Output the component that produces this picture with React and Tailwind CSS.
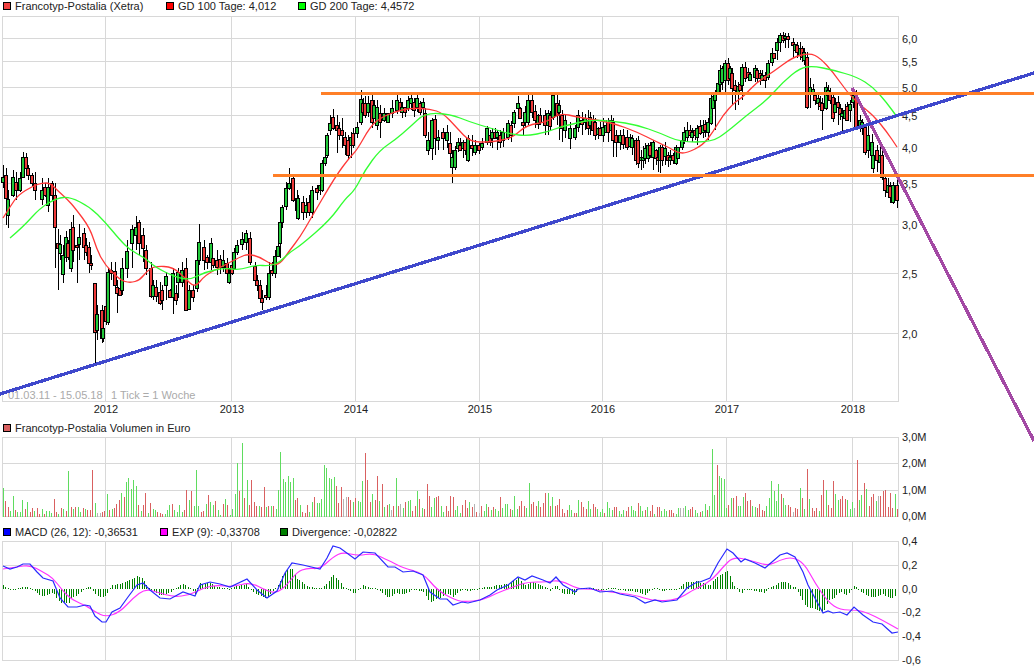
import React from 'react';

// [x, bodyTop, bodyBottom, green?, wickTop?, wickBottom?] in page pixels
const candles = [
  [3,177,182,1,165],[6,175,198,0,168,225],[8,199,215,1,190,228],[13,177,195,1,170,197],[16,182,190,0,172,200],[20,178,190,1,172,192],[23,157,177,1],[26,157,168,0],[28,168,175,0,165],[32,175,183,0],[35,183,190,0,172,200],
  [42,190,199,1,178,205],[45,187,195,0],[48,187,205,1,178,212],[52,183,195,0],[55,195,227,0,183,268],
  [58,243,248,0,229,290],[60,244,253,1,235,260],[63,255,274,1,245,283],[66,237,257,1,231,262],[68,243,257,0],[71,229,268,1,222,272],[73,227,250,0,215,262],[77,245,247,0,238,283],[79,237,244,1,224,260],[84,233,247,0,228,260],[86,245,252,0,238,256],[89,247,263,0,242,273],[91,263,265,0,255,270],
  [95,283,332,0,283,363],[97,314,330,1,305,340],[102,310,338,0,305,343],[103,328,338,1],[106,306,321,0,300,325],[108,272,322,1,268,325],[111,270,273,0,262],[115,271,285,0,262,292],[117,287,293,0,280,313],[120,288,295,0],[122,268,290,1,258,295],[127,251,268,1,240,278],[132,229,243,1,225,268],[136,227,235,1,216,250],[139,222,243,0,220,255],[143,235,248,0,228,262],[146,250,268,0,245,275],[151,268,296,0,262,298],[153,285,296,1,280,300],[156,287,296,0,280,302],[160,292,303,0,282,305],[162,290,300,0,285,310],[166,276,285,1,272,300],[170,290,297,0],[173,273,297,1,268,314],[176,293,300,0,285,305],[178,272,282,1,268,298],[182,270,282,1,262,287],[186,268,310,0,258,310],[189,290,309,1,285,310],[193,290,297,0,285,302],[197,260,288,1,255,292],[199,242,260,1,224,265],[204,247,260,0,240,270],[207,257,262,0],[211,243,262,1,238,270],[213,258,265,0],[217,260,267,0,250,275],[220,259,267,0],[223,260,267,1,250,272],[227,263,273,0,258,282],[229,273,282,1,268,284],[232,265,273,0,258,275],[234,252,268,1,248,270],[237,245,252,1],[242,239,244,1,232,250],[246,233,242,1,230,250],[250,238,262,0,232,265],[255,266,280,0,262,285],[257,280,285,0],[260,285,298,0,280,302],[262,298,302,0,290,310],[266,295,297,0,285,300],[269,273,297,1,262,300],[272,270,273,0,262,276],[275,256,273,1,250,278],[278,246,256,1],[280,222,243,1,212,258],[282,207,222,1,205,228],[286,188,206,1,182,210],[289,183,188,1,168,190],[293,178,200,0,176,202],[297,198,210,0,190,218],[298,198,218,1,195,220],
  [303,202,212,0,196,220],[306,205,212,1,198,218],[309,202,212,0,195],[312,190,212,1,186,218],[317,188,192,0,185,200],[320,185,190,1,180],[322,163,190,1,160,192],[325,157,163,1,145,166],[327,135,155,1,133,158],[330,123,130,1,115,135],[333,117,128,0,109,130],[337,125,130,0,115,153],[339,128,135,0,122,140],[342,130,135,0,118,148],[345,137,145,0,132,155],[348,140,155,0,135,160],[351,137,145,1,132,158],[353,133,145,0,128,148],[357,127,133,1,122,138],[361,99,122,1,90,125],[363,103,112,0,98],[365,103,115,0,96,118],[368,103,112,1,96],[372,100,122,0,92,128],[374,105,118,1],[377,107,125,1,100,130],[380,113,122,0,105,138],[384,113,120,1,108],[388,113,122,1],[392,108,113,1,100],[397,100,110,1,95,114],[400,102,110,0,98],[402,107,112,1,102,118],[405,107,112,0],[408,100,108,1,96],[411,98,103,1,94,110],[414,102,110,0],[417,98,107,1,94,112],[420,103,112,0],[423,102,107,1,98,113],[425,113,135,0,108,138],[428,140,150,1,132,155],[432,120,148,1,118,160],[435,119,138,0,115,155],[438,137,140,1,130,150],[443,132,138,0,128,150],[447,132,140,1,125,148],[450,143,153,0,132,165],[452,157,167,1,150,183],[455,150,167,1,146,170],[458,142,148,1,138,152],[460,145,150,0,138],[463,142,148,1,140,158],[465,142,150,0],[468,138,160,1,135,162],[472,145,148,0,135,156],[475,145,152,1,140,155],[479,145,150,0],[482,143,147,1,138,150],[487,128,142,1,126,145],[490,135,142,0,130],[492,132,138,1,128,148],[495,132,138,0,128],[497,132,137,1,130,150],[500,135,142,0,130],[503,132,140,1,128,147],[508,123,137,1,120,140],[511,125,135,0],[514,112,123,1,110,128],[518,103,108,1,96,112],[520,108,118,0],[523,122,125,0,115,135],[525,112,122,1],[528,100,122,1,95,125],[532,100,112,0,95,118],[535,111,120,0,105,128],[538,115,124,1],[540,115,122,0,108],[545,115,125,0,110,135],[548,113,125,1,110,135],[550,115,126,0],[553,95,117,1,92,120],[557,103,115,0,95,125],[559,105,112,1,100,140],[562,115,128,0,110,142],[565,120,130,1,115,138],[570,128,138,1,122,149],[575,128,137,1,125,140],[578,115,127,1,110,132],[582,120,124,0,112,135],[585,118,122,1,114,130],[588,120,128,0,110,135],
  [590,117,125,1,112,135],[593,120,130,0,115],[595,122,135,0,118,140],[598,128,134,1],[600,128,135,0,122,136],[603,127,135,1,118,142],[606,125,132,1],[608,122,132,0,118,142],[611,120,130,1,115],[613,122,140,0,118,157],[616,135,142,0,130,157],[620,135,142,1,130,150],[623,135,144,0],[627,137,147,0,130,150],[630,137,146,1],[632,138,147,1,135,155],[636,140,160,0,138,165],[638,140,163,0,136,168],[641,157,160,1,150,170],[643,157,160,1,146,168],[645,148,158,1],[648,145,158,1,143,162],[650,145,155,0],[653,142,157,1,140,170],[656,150,158,0],[658,157,160,0,150,172],[660,147,160,1,145,173],[662,147,160,0,145,166],[665,148,156,1,142,165],[668,155,160,0],[670,157,160,1,150,165],[673,155,160,0],[676,147,163,1,145,165],[678,147,158,1],[682,140,147,1,135,150],[684,132,140,1],[687,130,137,1,122,142],[690,130,135,0,125],[692,132,137,1,128,142],[695,130,135,0],[697,128,137,1,125,145],[700,126,133,0],[703,125,132,1,120,138],[705,124,130,0],[708,122,132,1,118,140],[711,98,123,1,92,125],[713,96,108,1],[715,93,100,1,90,130],[718,83,93,1,72,95],[720,70,84,1,65,92],[722,68,82,1,66,90],[725,63,80,1,60,92],[728,63,80,0,58,85],[730,68,78,1],[732,73,88,0,68,105],[735,85,90,0,80,110],[738,86,94,1,82,105],[740,84,90,0],[742,67,85,1,64,100],[745,67,78,0,62,82],[748,72,77,0,68,80],[750,74,80,1],[755,68,77,1,65,82],[757,70,78,0,68],[760,73,78,0,70,85],[762,75,80,1],[765,75,80,0,72,88],[768,63,77,1,60,80],[772,53,62,1,48,66],[774,53,58,0],[777,42,50,1,38,60],[780,35,42,1,33,52],[783,35,40,0,32],[785,36,38,1,33,48],[788,36,39,0,33,48],[793,42,45,0,38,58],[795,44,50,1],[797,45,52,0,42,58],[800,48,55,1,42,60],[802,48,57,0,46,62],[804,52,60,1,48,65],[807,57,107,0,52,109],[810,87,93,1,78,108],[813,89,94,1,84],[815,95,100,0,92,105],[818,98,103,1,95,110],[820,102,106,0,96],[822,103,110,0,98,130],[826,87,108,1,82,110],[828,90,95,1,85],[830,93,100,0,88],[833,97,118,0,94,122],[835,104,112,1],[838,102,107,0,96,125],[840,108,114,0],[842,113,116,1,108,132],[845,110,118,1,104],[847,106,120,0,102],[850,104,110,1,100,122],[853,95,102,1,92,108],[856,95,127,0,90,128],[860,120,127,1,115,132],[862,122,128,1],[865,127,152,0,124,155],[868,135,150,1,125,158],[872,142,155,1,134],[873,155,168,1,150,173],[877,150,160,0,145,172],[880,155,162,1,142],[882,155,177,0,150,180],[885,178,190,0,176,197],[888,185,192,1,178],[890,186,197,0,182,203],[893,185,202,1,182,204],[897,185,200,0,178,208],
];

const ma100 = [[3,218],[10,207],[18,195],[33,186],[42,183],[50,183],[57,190],[68,200],[75,208],[90,228],[97,250],[105,265],[120,280],[130,283],[140,280],[147,271],[155,266],[173,267],[185,278],[195,288],[205,275],[225,265],[240,257],[248,254],[260,257],[272,265],[280,264],[290,250],[300,237],[310,220],[335,177],[350,157],[357,150],[370,127],[380,118],[397,111],[412,108],[430,109],[443,113],[457,128],[470,142],[490,142],[503,140],[513,137],[527,125],[547,122],[560,113],[577,117],[590,119],[613,123],[637,132],[657,142],[670,148],[678,153],[687,153],[703,145],[713,132],[723,115],[735,102],[743,97],[757,82],[773,72],[793,57],[810,53],[820,58],[833,72],[847,92],[860,105],[873,115],[887,132],[897,147]];
const ma200 = [[10,238],[23,227],[40,208],[57,198],[70,197],[90,207],[105,222],[120,240],[130,250],[145,258],[155,267],[175,277],[190,280],[205,272],[225,268],[240,270],[255,265],[270,266],[280,262],[290,252],[300,246],[330,220],[345,199],[355,190],[365,170],[380,150],[395,140],[410,127],[425,113],[450,114],[470,122],[490,128],[510,134],[527,136],[547,132],[560,127],[577,123],[590,120],[613,121],[637,125],[660,133],[680,142],[712,142],[727,132],[747,115],[767,100],[783,82],[800,68],[813,66],[833,70],[857,77],[873,87],[887,103],[897,117]];

// volume bars: positive = green, negative = red, above 100 = grey (height v - 100)
const volSegments = [
  { from: 3, to: 389, bars: [29,-16,-10,6,21,-7,5,5,17,-8,15,-5,-9,6,-9,-3,8,-3,6,6,4,-18,-5,3,-9,8,-6,46,-10,8,-10,10,5,-9,8,-7,-7,-47,14,104,104,-5,-6,23,-7,8,-9,-13,-17,24,-20,35,39,28,37,31,-12,6,-12,-24,4,-14,8,7,-5,-4,-3,3,7,12,-13,7,5,12,5,-7,-27,17,-26,11,47,11,-5,-6,13,-22,15,12,-16,7,2,-13,18,-12,2,8,23,54,-26,74,-19,37,-12,-37,-15,-11,11,-10,-30,10,-11,11,-11,8,27,65,38,35,41,35,39,-17,-19,12,-5,-4,-12,5,15,-20,14,14,18,52,49,39,38,40,-31,-14,-30,118,120,-20,-17,15,-19,16,15,36,-64,-37,-15,23,-17,-41,16,-33,10,-12,13] },
  { from: 391, to: 697, bars: [107,-11,39,-11,113,9,-15,16,17,-6,-11,26,-18,9,-8,-33,-21,10,19,-20,-21,11,5,-11,-6,-21,-20,7,11,4,-12,-17,-9,15,-10,113,-5,104,-11,6,13,-10,7,-10,8,6,-20,9,13,13,-8,7,21,8,-11,-16,-11,9,34,-13,-15,-11,16,-10,-14,-24,24,-11,20,-11,-12,-18,-8,-4,-7,12,7,-4,-4,17,-15,-10,-8,16,8,-13,-10,8,5,8,-4,15,9,7,-10,-10,6,3,7,-6,-10,11,7,6,-14,11,6,-7,10,-6,-12,3,-10,-10,6,8,6,-7,-7,-4,3,9,109,109,11,7,-8,-10,7,4] },
  { from: 700, to: 897, bars: [-5,6,13,-7,11,68,22,-52,41,39,38,9,-12,19,-19,-21,11,11,20,-24,-16,-17,11,10,-9,-13,-7,-6,11,19,36,26,16,33,-23,19,12,-12,-10,105,-9,-8,29,-19,8,-48,18,-9,-6,-9,6,-22,-37,27,-12,-9,-36,23,17,-18,-21,-18,17,8,15,109,-57,17,22,-34,28,-11,-20,-23,16,121,-21,-26,-27,-10,-24,-9,23,-8] },
];

const macd = [[3,566],[10,569],[17,567],[23,564],[30,564],[37,572],[43,578],[53,581],[60,598],[68,607],[77,607],[85,605],[90,606],[95,616],[102,622],[106,622],[112,612],[120,608],[128,597],[137,585],[143,583],[150,590],[160,598],[170,599],[183,592],[195,596],[200,585],[210,582],[220,584],[230,587],[247,579],[257,590],[267,598],[277,591],[285,573],[292,563],[303,565],[320,569],[327,558],[333,546],[340,548],[355,559],[363,552],[375,553],[388,567],[395,567],[403,572],[413,571],[423,575],[430,592],[440,599],[447,599],[453,605],[462,602],[468,603],[480,600],[490,595],[497,590],[508,585],[518,577],[525,580],[532,576],[543,580],[550,583],[556,577],[563,585],[575,592],[578,589],[590,588],[600,592],[612,591],[620,594],[635,597],[645,603],[655,600],[662,602],[677,600],[687,588],[697,582],[700,582],[710,578],[718,563],[727,549],[733,553],[741,562],[745,559],[755,563],[765,568],[780,555],[787,553],[795,557],[803,572],[808,585],[823,613],[828,611],[833,613],[840,612],[847,615],[854,607],[863,615],[873,622],[882,624],[892,633],[898,632]];
const expLine = [[3,569],[17,567],[30,565],[43,572],[53,578],[62,590],[72,600],[87,606],[95,612],[106,617],[120,612],[133,598],[145,589],[157,592],[173,597],[190,595],[203,588],[217,585],[233,587],[250,582],[267,591],[277,593],[287,585],[297,572],[307,568],[320,569],[333,557],[343,552],[358,556],[373,553],[387,560],[390,561],[403,568],[423,573],[437,590],[453,599],[463,602],[483,600],[497,593],[513,587],[527,582],[547,582],[560,580],[578,589],[590,589],[610,592],[635,595],[653,601],[677,600],[693,590],[700,587],[713,579],[723,567],[733,557],[750,560],[768,566],[780,560],[792,557],[804,563],[815,583],[828,602],[840,610],[857,610],[868,613],[882,620],[898,629]];

const hGrid = [38, 61, 87, 115, 147, 183, 224, 273, 333];
const yearGrid = [105, 231, 355, 479, 602, 726, 852];
const years = [2012, 2013, 2014, 2015, 2016, 2017, 2018];
const priceLabels = [['6,0', 38], ['5,5', 61], ['5,0', 87], ['4,5', 115], ['4,0', 147], ['3,5', 183], ['3,0', 224], ['2,5', 273], ['2,0', 333]];
const volLabels = [['3,0M', 436], ['2,0M', 462], ['1,0M', 489], ['0,0M', 515]];
const macdLabels = [['0,4', 540], ['0,2', 564], ['0,0', 588], ['-0,2', 611], ['-0,4', 635], ['-0,6', 659]];

const toPoints = (pts) => pts.map((p) => p.join(',')).join(' ');

// midpoint quadratics so the averages don't kink at every traced point
const smooth = (pts) => {
  let d = `M${pts[0][0]} ${pts[0][1]}`;
  for (let i = 1; i < pts.length - 1; i++) {
    const mx = (pts[i][0] + pts[i + 1][0]) / 2;
    const my = (pts[i][1] + pts[i + 1][1]) / 2;
    d += ` Q${pts[i][0]} ${pts[i][1]} ${mx} ${my}`;
  }
  const last = pts[pts.length - 1];
  return `${d} L${last[0]} ${last[1]}`;
};

const valueAt = (pts, x) => {
  for (let i = 1; i < pts.length; i++) {
    if (x <= pts[i][0]) {
      const t = (x - pts[i - 1][0]) / (pts[i][0] - pts[i - 1][0]);
      return pts[i - 1][1] + (pts[i][1] - pts[i - 1][1]) * t;
    }
  }
  return pts[pts.length - 1][1];
};

const volBars = volSegments.flatMap((s) =>
  s.bars.map((v, i) => ({ x: Math.round(s.from + (i * (s.to - s.from)) / (s.bars.length - 1)), v }))
);

const divBars = Array.from({ length: 368 }, (_, i) => {
  const x = 3 + i * 2.43;
  const diff = (valueAt(expLine, x) - valueAt(macd, x)) * 1.3;
  return { x: Math.round(x), diff: Math.abs(diff) < 1 ? (diff < 0 ? -1 : 1) : diff };
});

const Grid = ({ left = 2, right = 898, top, bottom, rows }) => (
  <g stroke="#d8d8d8" strokeWidth="1" shapeRendering="crispEdges">
    <rect x={left + 0.5} y={top + 0.5} width={right - left} height={bottom - top} fill="none" />
    {rows.map((y) => (
      <line key={y} x1={left} x2={right} y1={y + 0.5} y2={y + 0.5} />
    ))}
    {yearGrid.map((x) => (
      <line key={x} x1={x + 0.5} x2={x + 0.5} y1={top} y2={bottom} />
    ))}
  </g>
);

const AxisLabels = ({ labels }) => (
  <g className="text-[11px] fill-[#222222]">
    {labels.map(([t, y]) => (
      <text key={t} x="902" y={y + 5}>{t}</text>
    ))}
  </g>
);

const Candle = ({ c }) => {
  const [x, top, bottom, green, wickTop, wickBottom] = c;
  const seed = (x * 7919) % 97;
  const hi = wickTop ?? top - (seed % 7);
  const lo = wickBottom ?? bottom + ((seed >> 2) % 8);
  return (
    <g shapeRendering="crispEdges">
      <line x1={x + 0.5} x2={x + 0.5} y1={hi} y2={lo} stroke="#000" />
      <rect x={x - 1.5} y={top} width={3} height={Math.max(bottom - top, 1)} fill={green ? '#22c93a' : '#ee3a3a'} stroke="#000" />
    </g>
  );
};

const Legend = ({ items, className }) => (
  <div className={`flex items-center shrink-0 h-[12px] pl-[3px] text-[11px] leading-none text-[#222222] ${className}`}>
    {items.map((it) => (
      <div key={it.label} className="flex items-center gap-[4px]" style={{ width: it.width }}>
        <span className="w-[8px] h-[8px] border border-black" style={{ backgroundColor: it.color }} />
        <span className="whitespace-nowrap">{it.label}</span>
      </div>
    ))}
  </div>
);

const App = () => {
  return (
    <div className="w-[1034px] h-[670px] bg-white overflow-hidden flex flex-col font-['Liberation_Sans',Arial,sans-serif]">
      <Legend className="mb-[4px]" items={[
        { color: '#f04040', label: 'Francotyp-Postalia (Xetra)', width: 163 },
        { color: '#ff0000', label: 'GD 100 Tage: 4,012', width: 132 },
        { color: '#00ff00', label: 'GD 200 Tage: 4,4572' },
      ]} />

      {/* price chart */}
      <svg width="1034" height="406" viewBox="0 16 1034 406" className="block overflow-visible shrink-0">
        <Grid top={16} bottom={401} rows={hGrid} />
        <AxisLabels labels={priceLabels} />
        {years.map((y, i) => (
          <text key={y} x={yearGrid[i] + 1} y="413" textAnchor="middle" className="text-[11px] fill-[#222222]">{y}</text>
        ))}
        <text x="8" y="399" className="text-[11px] fill-[#aaaaaa]">01.03.11 - 15.05.18</text>
        <text x="111" y="399" className="text-[11px] fill-[#aaaaaa]">1 Tick = 1 Woche</text>
        {candles.map((c, i) => (
          <Candle key={i} c={c} />
        ))}
        <path d={smooth(ma100)} fill="none" stroke="#ff3838" strokeWidth="1.3" />
        <path d={smooth(ma200)} fill="none" stroke="#33ff33" strokeWidth="1.3" />
        <g shapeRendering="crispEdges">
          <line x1="852" y1="88" x2="1034" y2="441" stroke="#a349a4" strokeWidth="3.3" />
          <line x1="0" y1="394" x2="1034" y2="73" stroke="#3f48cc" strokeWidth="3.3" />
          <line x1="321" y1="93" x2="1034" y2="93" stroke="#ff7f27" strokeWidth="3" />
          <line x1="273" y1="175.5" x2="1034" y2="175.5" stroke="#ff7f27" strokeWidth="3" />
        </g>
      </svg>

      <Legend className="mb-[3px]" items={[{ color: '#d96060', label: 'Francotyp-Postalia Volumen in Euro' }]} />

      {/* volume */}
      <svg width="1034" height="89" viewBox="0 437 1034 89" className="block overflow-visible shrink-0">
        <Grid top={437} bottom={516} rows={[463, 490]} />
        <AxisLabels labels={volLabels} />
        <g shapeRendering="crispEdges">
          {volBars.map((b, i) => {
            const grey = b.v > 100;
            const h = grey ? b.v - 100 : Math.abs(b.v);
            return <rect key={i} x={b.x} y={517 - h} width="1" height={h} fill={grey ? '#b4b4b4' : b.v > 0 ? '#5fdc5f' : '#d96060'} />;
          })}
        </g>
      </svg>

      <Legend className="mb-[3px]" items={[
        { color: '#0000ff', label: 'MACD (26, 12): -0,36531', width: 157 },
        { color: '#ff00ff', label: 'EXP (9): -0,33708', width: 120 },
        { color: '#008000', label: 'Divergence: -0,02822' },
      ]} />

      {/* macd */}
      <svg width="1034" height="129" viewBox="0 541 1034 129" className="block overflow-visible shrink-0">
        <Grid top={541} bottom={660} rows={[565, 612, 636]} />
        <AxisLabels labels={macdLabels} />
        <g shapeRendering="crispEdges">
          {divBars.map((b, i) => (
            <rect key={i} x={b.x} y={b.diff > 0 ? 589 - b.diff : 589} width="1" height={Math.abs(b.diff)} fill="#008000" />
          ))}
        </g>
        <path d={smooth(expLine)} fill="none" stroke="#ff33ff" strokeWidth="1.2" />
        <polyline points={toPoints(macd)} fill="none" stroke="#2a2aff" strokeWidth="1.2" />
      </svg>
    </div>
  );
};

export default App;
